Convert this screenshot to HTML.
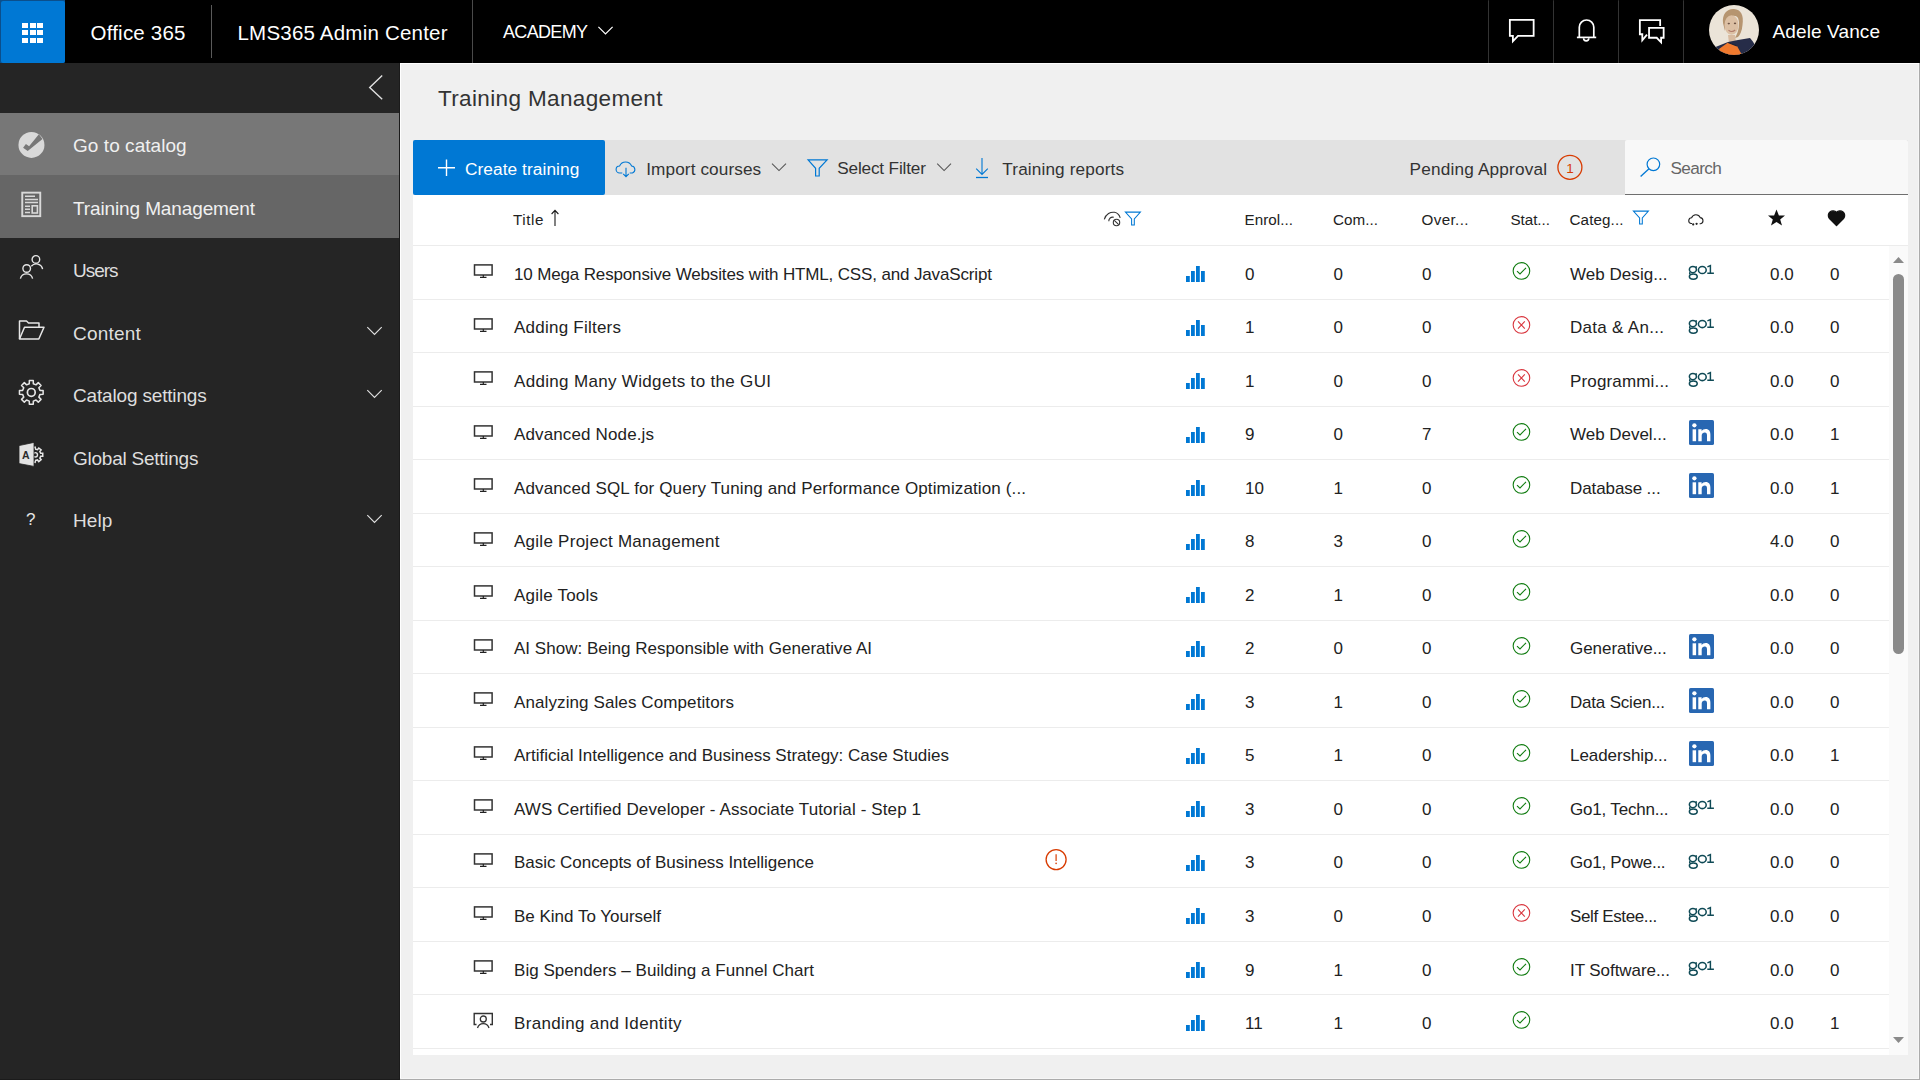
<!DOCTYPE html>
<html><head><meta charset="utf-8"><title>LMS365 Admin Center</title>
<style>
html,body{margin:0;padding:0;width:1920px;height:1080px;overflow:hidden;background:#f0f0f0;}
body{position:relative;font-family:"Liberation Sans", sans-serif;}
.t{position:absolute;white-space:nowrap;line-height:1;}
.b{position:absolute;display:block;}
svg.b{overflow:visible;}
</style></head><body>
<div class="b" style="left:0px;top:0px;width:1920px;height:63px;background:#000"></div>
<div class="b" style="left:0px;top:0px;width:65px;height:63px;background:#0b4f8c;border-bottom-right-radius:2px"></div>
<div class="b" style="left:1px;top:1px;width:64px;height:62px;background:#0078d4;border-radius:2px"></div>
<div class="b" style="left:22.1px;top:23px;width:5.7px;height:5.2px;background:#fff"></div>
<div class="b" style="left:29.9px;top:23px;width:5.7px;height:5.2px;background:#fff"></div>
<div class="b" style="left:37.4px;top:23px;width:5.7px;height:5.2px;background:#fff"></div>
<div class="b" style="left:22.1px;top:30.3px;width:5.7px;height:5.2px;background:#fff"></div>
<div class="b" style="left:29.9px;top:30.3px;width:5.7px;height:5.2px;background:#fff"></div>
<div class="b" style="left:37.4px;top:30.3px;width:5.7px;height:5.2px;background:#fff"></div>
<div class="b" style="left:22.1px;top:37.8px;width:5.7px;height:5.2px;background:#fff"></div>
<div class="b" style="left:29.9px;top:37.8px;width:5.7px;height:5.2px;background:#fff"></div>
<div class="b" style="left:37.4px;top:37.8px;width:5.7px;height:5.2px;background:#fff"></div>
<div class="t" style="left:90.5px;top:22.95px;font-size:20.5px;color:#fff;letter-spacing:0.214px;">Office 365</div>
<div class="b" style="left:211px;top:5px;width:1px;height:53px;background:#5a5a5a"></div>
<div class="t" style="left:237.5px;top:22.95px;font-size:20.5px;color:#fff;letter-spacing:0.207px;">LMS365 Admin Center</div>
<div class="b" style="left:472px;top:0px;width:1px;height:63px;background:#4a4a4a"></div>
<div class="t" style="left:503px;top:23.06px;font-size:18px;color:#fff;letter-spacing:-0.669px;">ACADEMY</div>
<svg class="b" style="left:596px;top:25px;" width="19" height="12" viewBox="0 0 19 12"><path d="M2.4 1.9 L9.5 8.9 L16.6 1.9" fill="none" stroke="#fff" stroke-width="1.2"/></svg>
<div class="b" style="left:1488px;top:0px;width:1px;height:63px;background:#333;border-radius:1px"></div>
<div class="b" style="left:1553px;top:0px;width:1px;height:63px;background:#333;border-radius:1px"></div>
<div class="b" style="left:1618px;top:0px;width:1px;height:63px;background:#333;border-radius:1px"></div>
<div class="b" style="left:1683px;top:0px;width:1px;height:63px;background:#333;border-radius:1px"></div>
<svg class="b" style="left:1506px;top:16px;" width="32" height="30" viewBox="0 0 32 30"><path d="M3.85 19.9 V3.85 H27.65 V19.9 H12 L6.9 25.3 V19.9 Z" fill="none" stroke="#fff" stroke-width="1.8" stroke-linejoin="miter"/></svg>
<svg class="b" style="left:1574px;top:16px;" width="26" height="28" viewBox="0 0 26 28"><path d="M5.3 21.4 V11.25 A7.25 7.25 0 0 1 19.8 11.25 V21.4" fill="none" stroke="#fff" stroke-width="1.7"/><path d="M2.9 21.4 H22.2" stroke="#fff" stroke-width="1.7"/><path d="M9.6 22.3 A2.6 2.6 0 0 0 14.8 22.3" fill="none" stroke="#fff" stroke-width="1.6"/></svg>
<svg class="b" style="left:1636px;top:16px;" width="32" height="30" viewBox="0 0 32 30"><g fill="none" stroke="#fff" stroke-width="1.8"><path d="M24.15 9.9 V4.05 H3.85 V18.25 H6.3 V24.3 L11 18.7"/><path d="M13.05 11.95 H27.65 V21.75 H25.1 V26.3 L20.7 21.75 H13.05 Z"/></g></svg>
<svg class="b" style="left:1709px;top:5px;filter:blur(0.35px)" width="50" height="50" viewBox="0 0 50 50"><defs><clipPath id="av"><circle cx="25" cy="25" r="25"/></clipPath></defs>
<g clip-path="url(#av)"><rect width="50" height="50" fill="#ebe4d8"/>
<path d="M14 18 C13 9 18 3.5 25 4 C32 4.5 35 10 33.5 20 C33 26 31 30 29 32 L26 33 C30 26 31 18 29 13 C27 10 22 10 19 14 C17 17 16.5 22 16 26 Z" fill="#b69570"/>
<ellipse cx="22.5" cy="20" rx="7" ry="9.8" fill="#dcc0a4"/>
<path d="M19 30 L26 30 L27 37 L20 38 Z" fill="#d8bba0"/>
<path d="M4 43 L19 37 L29 35 L41 33 C45 37 48 44 50 50 L0 50 Z" fill="#262c48"/>
<path d="M10 44 L19 37.5 L28 41 L33 50 L12 50 Z" fill="#f07a2e"/>
<path d="M19 37.5 L28 41" stroke="#1e2238" stroke-width="1.2"/>
<ellipse cx="19.8" cy="18.6" rx="1.2" ry="0.8" fill="#6e5446"/><ellipse cx="26" cy="18.4" rx="1.2" ry="0.8" fill="#6e5446"/>
<path d="M19.5 25.2 Q22.8 28 26.2 25" fill="none" stroke="#b07a6a" stroke-width="1.1"/>
</g></svg>
<div class="t" style="left:1772.5px;top:21.92px;font-size:19px;color:#fff;letter-spacing:0.116px;">Adele Vance</div>
<div class="b" style="left:0px;top:63px;width:400px;height:1017px;background:#252525"></div>
<svg class="b" style="left:364px;top:72px;" width="24" height="32" viewBox="0 0 24 32"><path d="M18.2 3.5 L5.7 15.5 L18.2 27.2" fill="none" stroke="#e0e0e0" stroke-width="1.4"/></svg>
<div class="b" style="left:0px;top:113px;width:400px;height:62px;background:#777"></div>
<div class="b" style="left:0px;top:175px;width:400px;height:63px;background:#666"></div>
<div class="t" style="left:73px;top:135.92px;font-size:19px;color:#f0f0f0;letter-spacing:0.056px;">Go to catalog</div>
<div class="t" style="left:73px;top:198.92px;font-size:19px;color:#f0f0f0;letter-spacing:-0.118px;">Training Management</div>
<div class="t" style="left:73px;top:260.92px;font-size:19px;color:#dedede;letter-spacing:-1.031px;">Users</div>
<div class="t" style="left:73px;top:323.92px;font-size:19px;color:#dedede;letter-spacing:0.192px;">Content</div>
<div class="t" style="left:73px;top:385.92px;font-size:19px;color:#dedede;letter-spacing:-0.170px;">Catalog settings</div>
<div class="t" style="left:73px;top:448.92px;font-size:19px;color:#dedede;letter-spacing:-0.247px;">Global Settings</div>
<div class="t" style="left:73px;top:510.92px;font-size:19px;color:#dedede;letter-spacing:0.107px;">Help</div>
<svg class="b" style="left:362px;top:323.2px;" width="24" height="16" viewBox="0 0 24 16"><path d="M5.3 4.2 L12.5 11.4 L19.7 4.2" fill="none" stroke="#e0e0e0" stroke-width="1.15"/></svg>
<svg class="b" style="left:362px;top:386.3px;" width="24" height="16" viewBox="0 0 24 16"><path d="M5.3 4.2 L12.5 11.4 L19.7 4.2" fill="none" stroke="#e0e0e0" stroke-width="1.15"/></svg>
<svg class="b" style="left:362px;top:511.29999999999995px;" width="24" height="16" viewBox="0 0 24 16"><path d="M5.3 4.2 L12.5 11.4 L19.7 4.2" fill="none" stroke="#e0e0e0" stroke-width="1.15"/></svg>
<svg class="b" style="left:17px;top:131px;" width="29" height="28" viewBox="0 0 29 28"><circle cx="14.45" cy="13.9" r="13" fill="#d9d9d9"/><path d="M6.1 16.7 L8.9 13 L12.1 15.3 L21.9 3.3 L25.5 7.9 L10.7 19.9 Z" fill="#777"/></svg>
<svg class="b" style="left:20px;top:191px;" width="23" height="27" viewBox="0 0 23 27"><rect x="2.25" y="1.65" width="18" height="23.5" fill="none" stroke="#d9d9d9" stroke-width="1.9"/><path d="M5 5.2 H15 M5 8.4 H18 M5 11.6 H18 M5 15.2 H10 M5 18.3 H10 M5 21.4 H10" stroke="#d9d9d9" stroke-width="1.5"/><rect x="12.2" y="14.8" width="5.2" height="7.2" fill="none" stroke="#d9d9d9" stroke-width="1.6"/></svg>
<svg class="b" style="left:18px;top:254px;" width="28" height="28" viewBox="0 0 28 28"><g fill="none" stroke="#e6e6e6" stroke-width="1.4"><circle cx="17.9" cy="5.4" r="3.8"/><path d="M13.3 12.3 A6.4 6.4 0 0 1 24.6 15.2"/><circle cx="8.7" cy="14.5" r="3.8"/><path d="M2.4 24.6 A6.3 6.3 0 0 1 14.6 24.6"/></g></svg>
<svg class="b" style="left:17px;top:320px;" width="30" height="22" viewBox="0 0 30 22"><g fill="none" stroke="#e6e6e6" stroke-width="1.5" stroke-linejoin="round"><path d="M2.5 19 V1 H9.5 L11.5 3 H22 V7"/><path d="M2.5 19 L7.5 7.3 H27 L21.8 19 Z"/></g></svg>
<svg class="b" style="left:17px;top:378px;" width="28" height="28" viewBox="0 0 28 28"><path d="M22.97 12.39 L26.14 12.43 L26.14 16.37 L22.97 16.41 L21.85 19.11 L24.06 21.38 L21.28 24.16 L19.01 21.95 L16.31 23.07 L16.27 26.24 L12.33 26.24 L12.29 23.07 L9.59 21.95 L7.32 24.16 L4.54 21.38 L6.75 19.11 L5.63 16.41 L2.46 16.37 L2.46 12.43 L5.63 12.39 L6.75 9.69 L4.54 7.42 L7.32 4.64 L9.59 6.85 L12.29 5.73 L12.33 2.56 L16.27 2.56 L16.31 5.73 L19.01 6.85 L21.28 4.64 L24.06 7.42 L21.85 9.69 Z" fill="none" stroke="#e6e6e6" stroke-width="1.5" stroke-linejoin="round"/><circle cx="14.3" cy="14.4" r="3.9" fill="none" stroke="#e6e6e6" stroke-width="1.7"/></svg>
<svg class="b" style="left:17px;top:440px;" width="30" height="30" viewBox="0 0 30 30"><path d="M23.69 13.29 L25.75 13.28 L25.75 16.32 L23.69 16.31 L22.85 18.07 L24.13 19.67 L21.75 21.57 L20.48 19.96 L18.58 20.39 L18.13 22.40 L15.16 21.72 L15.62 19.72 L14.10 18.50 L12.25 19.40 L10.93 16.66 L12.79 15.78 L12.79 13.82 L10.93 12.94 L12.25 10.20 L14.10 11.10 L15.62 9.88 L15.16 7.88 L18.13 7.20 L18.58 9.21 L20.48 9.64 L21.75 8.03 L24.13 9.93 L22.85 11.53 Z" fill="none" stroke="#e6e6e6" stroke-width="1.5"/><circle cx="18.3" cy="14.8" r="2.2" fill="none" stroke="#e6e6e6" stroke-width="1.4"/><path d="M2 5.6 L17 2.4 V26.4 L2 23.6 Z" fill="#e3e3e3" stroke="#252525" stroke-width="0.8"/><text x="5" y="19.2" font-family="Liberation Sans" font-size="10.5" font-weight="bold" fill="#2a2a2a">A</text></svg>
<div class="t" style="left:26px;top:511.11px;font-size:17px;color:#e6e6e6;">?</div>
<div class="b" style="left:400px;top:63px;width:1520px;height:1017px;background:#f0f0f0"></div>
<div class="b" style="left:400px;top:63px;width:1520px;height:1px;background:#fff"></div>
<div class="b" style="left:400px;top:63px;width:1px;height:1017px;background:#fff"></div>
<div class="t" style="left:438px;top:87.95px;font-size:22.5px;color:#333;letter-spacing:0.359px;">Training Management</div>
<div class="b" style="left:413px;top:140px;width:1495px;height:55px;background:#e2e2e2"></div>
<div class="b" style="left:413px;top:140px;width:192px;height:55px;background:#0078d4;border-radius:2px"></div>
<svg class="b" style="left:436px;top:158px;" width="22" height="20" viewBox="0 0 22 20"><path d="M10.5 1.5 V18 M2 9.8 H19" stroke="#fff" stroke-width="1.4"/></svg>
<div class="t" style="left:464.9px;top:161.16px;font-size:17.3px;color:#fff;letter-spacing:0.074px;">Create training</div>
<svg class="b" style="left:614px;top:159px;" width="24" height="20" viewBox="0 0 24 20"><path d="M8.3 14 H5.6 A3.5 3.5 0 0 1 5.6 7 A6.5 6.5 0 0 1 17.6 7 A3.6 3.6 0 0 1 18.4 14 H15.7" fill="none" stroke="#0078d4" stroke-width="1.1"/><path d="M12 8.8 V17.6 M9.2 14.8 L12 17.6 L14.8 14.8" fill="none" stroke="#0078d4" stroke-width="1.1"/></svg>
<div class="t" style="left:646.2px;top:160.64px;font-size:17.2px;color:#333;letter-spacing:0.102px;">Import courses</div>
<svg class="b" style="left:770px;top:160px;" width="18" height="14" viewBox="0 0 18 14"><path d="M2 3.7 L9 10.6 L16 3.7" fill="none" stroke="#555" stroke-width="1.05"/></svg>
<svg class="b" style="left:805px;top:157px;" width="25" height="22" viewBox="0 0 25 22"><path d="M3.1 2.9 H22.1 L14.2 11.3 V19 H10.6 V11.3 Z" fill="none" stroke="#0078d4" stroke-width="1.2" stroke-linejoin="miter"/></svg>
<div class="t" style="left:837.2px;top:160.04px;font-size:17.2px;color:#333;letter-spacing:-0.163px;">Select Filter</div>
<svg class="b" style="left:935px;top:160px;" width="18" height="14" viewBox="0 0 18 14"><path d="M2.2 3.7 L9.1 10.6 L16 3.7" fill="none" stroke="#555" stroke-width="1.05"/></svg>
<svg class="b" style="left:972px;top:156px;" width="20" height="24" viewBox="0 0 20 24"><path d="M10 2 V18.5 M4.2 12.7 L10 18.5 L15.8 12.7" fill="none" stroke="#0078d4" stroke-width="1.1"/><path d="M4 21.5 H16" stroke="#0078d4" stroke-width="1.3"/></svg>
<div class="t" style="left:1002.3px;top:160.64px;font-size:17.2px;color:#333;letter-spacing:0.131px;">Training reports</div>
<div class="t" style="left:1409.5px;top:160.64px;font-size:17.2px;color:#333;letter-spacing:0.190px;">Pending Approval</div>
<svg class="b" style="left:1555px;top:154px;" width="30" height="30" viewBox="0 0 30 30"><circle cx="14.9" cy="13.3" r="12" fill="none" stroke="#d83b01" stroke-width="1.3"/><text x="14.9" y="18.6" text-anchor="middle" font-family="Liberation Sans" font-size="13.5" fill="#d83b01">1</text></svg>
<div class="b" style="left:1625px;top:140px;width:283px;height:54px;background:#f8f8f8;border-bottom:1px solid #6f6f6f;border-top-left-radius:2px;border-top-right-radius:2px"></div>
<svg class="b" style="left:1638px;top:154px;" width="26" height="26" viewBox="0 0 26 26"><circle cx="15.4" cy="10.3" r="6.3" fill="none" stroke="#0078d4" stroke-width="1.2"/><path d="M11 14.8 L2.6 22.6" stroke="#0078d4" stroke-width="1.3"/></svg>
<div class="t" style="left:1670.5px;top:159.54px;font-size:17.2px;color:#666;letter-spacing:-0.634px;">Search</div>
<div class="b" style="left:413px;top:195px;width:1495px;height:860px;background:#fff"></div>
<div class="b" style="left:413px;top:245px;width:1495px;height:1px;background:#ececec"></div>
<div class="t" style="left:513px;top:211.73px;font-size:15.2px;color:#222;letter-spacing:0.590px;">Title</div>
<svg class="b" style="left:548px;top:206px;" width="14" height="22" viewBox="0 0 14 22"><path d="M7 4.6 V19.9 M3.6 8 L7 4.4 L10.4 8" fill="none" stroke="#1a1a1a" stroke-width="1.1"/></svg>
<svg class="b" style="left:1102px;top:209px;" width="22" height="20" viewBox="0 0 22 20"><g fill="none" stroke="#333" stroke-width="1.1"><path d="M2.3 10.3 C4 5 8.5 2.7 12.5 3.3 C15.3 3.8 17.3 5.8 18.2 8.8"/><path d="M6.8 12.3 C6.6 9.4 9 7.6 11.8 8.3"/><circle cx="14.5" cy="13.5" r="3.2"/><path d="M12.3 11.3 L16.7 15.7"/></g></svg>
<svg class="b" style="left:1123px;top:210px;" width="20" height="18" viewBox="0 0 20 18"><path d="M2.4 2.1 H17.4 L11.3 9 V14.9 H8.6 V9 Z" fill="none" stroke="#0078d4" stroke-width="1.05"/></svg>
<div class="t" style="left:1244.5px;top:211.73px;font-size:15.2px;color:#222;letter-spacing:0.054px;">Enrol...</div>
<div class="t" style="left:1333px;top:211.73px;font-size:15.2px;color:#222;letter-spacing:0.053px;">Com...</div>
<div class="t" style="left:1421.5px;top:211.73px;font-size:15.2px;color:#222;letter-spacing:0.378px;">Over...</div>
<div class="t" style="left:1510.5px;top:211.73px;font-size:15.2px;color:#222;letter-spacing:-0.048px;">Stat...</div>
<div class="t" style="left:1569.5px;top:211.73px;font-size:15.2px;color:#222;letter-spacing:0.116px;">Categ...</div>
<svg class="b" style="left:1631px;top:209px;" width="20" height="18" viewBox="0 0 20 18"><path d="M2.4 2.1 H17.4 L11.3 9 V14.9 H8.6 V9 Z" fill="none" stroke="#0078d4" stroke-width="1.05"/></svg>
<svg class="b" style="left:1686px;top:212px;" width="20" height="16" viewBox="0 0 20 16"><path d="M6 11.5 H4.9 A2.9 2.9 0 0 1 5.6 5.8 A4.6 4.6 0 0 1 14.2 5.6 A3.1 3.1 0 0 1 14.6 11.7 H13.6" fill="none" stroke="#222" stroke-width="1.1"/><circle cx="7.2" cy="12.4" r="1.15" fill="#222"/><circle cx="10.6" cy="11.8" r="1.15" fill="#222"/></svg>
<svg class="b" style="left:1767px;top:208px;" width="19" height="19" viewBox="0 0 19 19"><path d="M9.5 1.5 L11.9 7.4 L18 7.6 L13.2 11.5 L15 17.6 L9.5 14 L4 17.6 L5.8 11.5 L1 7.6 L7.1 7.4 Z" fill="#111"/></svg>
<svg class="b" style="left:1827px;top:208.7px;" width="19" height="18" viewBox="0 0 19 18"><path d="M9.5 16.5 L2.5 9.5 A4.2 4.2 0 0 1 9.5 3.5 A4.2 4.2 0 0 1 16.5 9.5 Z" fill="#111" stroke="#111" stroke-width="1.4" stroke-linejoin="round"/></svg>
<div class="b" style="left:413px;top:299px;width:1476px;height:1px;background:#ececec"></div>
<svg class="b" style="left:472px;top:263px;" width="22" height="16" viewBox="0 0 22 16"><rect x="2.5" y="1.9" width="17.6" height="10.1" fill="none" stroke="#333" stroke-width="1.5"/><path d="M11.3 12 V14 M8 14.4 H14.5" stroke="#222" stroke-width="1.2"/></svg>
<div class="t" style="left:514px;top:265.61px;font-size:17px;color:#222;letter-spacing:-0.146px;">10 Mega Responsive Websites with HTML, CSS, and JavaScript</div>
<svg class="b" style="left:1186px;top:266px;" width="20" height="16" viewBox="0 0 20 16"><rect x="0" y="10" width="3.8" height="6" fill="#0078d4"/><rect x="5" y="5" width="3.8" height="11" fill="#0078d4"/><rect x="10" y="0" width="3.8" height="16" fill="#0078d4"/><rect x="15" y="5" width="3.8" height="11" fill="#0078d4"/></svg>
<div class="t" style="left:1245px;top:265.61px;font-size:17px;color:#222;">0</div>
<div class="t" style="left:1333.5px;top:265.61px;font-size:17px;color:#222;">0</div>
<div class="t" style="left:1422px;top:265.61px;font-size:17px;color:#222;">0</div>
<svg class="b" style="left:1511px;top:261px;" width="22" height="22" viewBox="0 0 22 22"><circle cx="10.45" cy="9.95" r="8.3" fill="none" stroke="#107c10" stroke-width="1.1"/><path d="M6 10.2 L9 13 L15 6.8" fill="none" stroke="#107c10" stroke-width="1.1"/></svg>
<div class="t" style="left:1570px;top:265.61px;font-size:17px;color:#222;letter-spacing:0.044px;">Web Desig...</div>
<svg class="b" style="left:1680px;top:255px;" width="40" height="30" viewBox="0 0 40 30"><g fill="none" stroke="#0f4a56" stroke-width="1.55"><ellipse cx="12.9" cy="14.6" rx="3.5" ry="3.1"/><path d="M15.6 12.3 L16.9 11.7"/><path d="M10.2 17.2 Q9.2 18.2 10.2 19"/><ellipse cx="13.3" cy="21.6" rx="3.9" ry="2.7"/><ellipse cx="22.3" cy="15" rx="3.9" ry="3.6"/><path d="M27.4 11.8 L30.4 10.6 V18.3 M27.3 18.3 H33.9" stroke-width="1.45"/></g></svg>
<div class="t" style="left:1770px;top:265.61px;font-size:17px;color:#222;">0.0</div>
<div class="t" style="left:1830px;top:265.61px;font-size:17px;color:#222;">0</div>
<div class="b" style="left:413px;top:352px;width:1476px;height:1px;background:#ececec"></div>
<svg class="b" style="left:472px;top:317px;" width="22" height="16" viewBox="0 0 22 16"><rect x="2.5" y="1.9" width="17.6" height="10.1" fill="none" stroke="#333" stroke-width="1.5"/><path d="M11.3 12 V14 M8 14.4 H14.5" stroke="#222" stroke-width="1.2"/></svg>
<div class="t" style="left:514px;top:319.14px;font-size:17px;color:#222;letter-spacing:0.236px;">Adding Filters</div>
<svg class="b" style="left:1186px;top:320px;" width="20" height="16" viewBox="0 0 20 16"><rect x="0" y="10" width="3.8" height="6" fill="#0078d4"/><rect x="5" y="5" width="3.8" height="11" fill="#0078d4"/><rect x="10" y="0" width="3.8" height="16" fill="#0078d4"/><rect x="15" y="5" width="3.8" height="11" fill="#0078d4"/></svg>
<div class="t" style="left:1245px;top:319.14px;font-size:17px;color:#222;">1</div>
<div class="t" style="left:1333.5px;top:319.14px;font-size:17px;color:#222;">0</div>
<div class="t" style="left:1422px;top:319.14px;font-size:17px;color:#222;">0</div>
<svg class="b" style="left:1511px;top:315px;" width="22" height="22" viewBox="0 0 22 22"><circle cx="10.45" cy="9.95" r="8.3" fill="none" stroke="#d9363e" stroke-width="1.1"/><path d="M7 6.4 L13.8 13.6 M13.8 6.4 L7 13.6" fill="none" stroke="#d9363e" stroke-width="1.1"/></svg>
<div class="t" style="left:1570px;top:319.14px;font-size:17px;color:#222;letter-spacing:0.297px;">Data &amp; An...</div>
<svg class="b" style="left:1680px;top:309px;" width="40" height="30" viewBox="0 0 40 30"><g fill="none" stroke="#0f4a56" stroke-width="1.55"><ellipse cx="12.9" cy="14.6" rx="3.5" ry="3.1"/><path d="M15.6 12.3 L16.9 11.7"/><path d="M10.2 17.2 Q9.2 18.2 10.2 19"/><ellipse cx="13.3" cy="21.6" rx="3.9" ry="2.7"/><ellipse cx="22.3" cy="15" rx="3.9" ry="3.6"/><path d="M27.4 11.8 L30.4 10.6 V18.3 M27.3 18.3 H33.9" stroke-width="1.45"/></g></svg>
<div class="t" style="left:1770px;top:319.14px;font-size:17px;color:#222;">0.0</div>
<div class="t" style="left:1830px;top:319.14px;font-size:17px;color:#222;">0</div>
<div class="b" style="left:413px;top:406px;width:1476px;height:1px;background:#ececec"></div>
<svg class="b" style="left:472px;top:370px;" width="22" height="16" viewBox="0 0 22 16"><rect x="2.5" y="1.9" width="17.6" height="10.1" fill="none" stroke="#333" stroke-width="1.5"/><path d="M11.3 12 V14 M8 14.4 H14.5" stroke="#222" stroke-width="1.2"/></svg>
<div class="t" style="left:514px;top:372.67px;font-size:17px;color:#222;letter-spacing:0.325px;">Adding Many Widgets to the GUI</div>
<svg class="b" style="left:1186px;top:373px;" width="20" height="16" viewBox="0 0 20 16"><rect x="0" y="10" width="3.8" height="6" fill="#0078d4"/><rect x="5" y="5" width="3.8" height="11" fill="#0078d4"/><rect x="10" y="0" width="3.8" height="16" fill="#0078d4"/><rect x="15" y="5" width="3.8" height="11" fill="#0078d4"/></svg>
<div class="t" style="left:1245px;top:372.67px;font-size:17px;color:#222;">1</div>
<div class="t" style="left:1333.5px;top:372.67px;font-size:17px;color:#222;">0</div>
<div class="t" style="left:1422px;top:372.67px;font-size:17px;color:#222;">0</div>
<svg class="b" style="left:1511px;top:368px;" width="22" height="22" viewBox="0 0 22 22"><circle cx="10.45" cy="9.95" r="8.3" fill="none" stroke="#d9363e" stroke-width="1.1"/><path d="M7 6.4 L13.8 13.6 M13.8 6.4 L7 13.6" fill="none" stroke="#d9363e" stroke-width="1.1"/></svg>
<div class="t" style="left:1570px;top:372.67px;font-size:17px;color:#222;letter-spacing:0.155px;">Programmi...</div>
<svg class="b" style="left:1680px;top:362px;" width="40" height="30" viewBox="0 0 40 30"><g fill="none" stroke="#0f4a56" stroke-width="1.55"><ellipse cx="12.9" cy="14.6" rx="3.5" ry="3.1"/><path d="M15.6 12.3 L16.9 11.7"/><path d="M10.2 17.2 Q9.2 18.2 10.2 19"/><ellipse cx="13.3" cy="21.6" rx="3.9" ry="2.7"/><ellipse cx="22.3" cy="15" rx="3.9" ry="3.6"/><path d="M27.4 11.8 L30.4 10.6 V18.3 M27.3 18.3 H33.9" stroke-width="1.45"/></g></svg>
<div class="t" style="left:1770px;top:372.67px;font-size:17px;color:#222;">0.0</div>
<div class="t" style="left:1830px;top:372.67px;font-size:17px;color:#222;">0</div>
<div class="b" style="left:413px;top:459px;width:1476px;height:1px;background:#ececec"></div>
<svg class="b" style="left:472px;top:424px;" width="22" height="16" viewBox="0 0 22 16"><rect x="2.5" y="1.9" width="17.6" height="10.1" fill="none" stroke="#333" stroke-width="1.5"/><path d="M11.3 12 V14 M8 14.4 H14.5" stroke="#222" stroke-width="1.2"/></svg>
<div class="t" style="left:514px;top:426.20px;font-size:17px;color:#222;letter-spacing:0.134px;">Advanced Node.js</div>
<svg class="b" style="left:1186px;top:427px;" width="20" height="16" viewBox="0 0 20 16"><rect x="0" y="10" width="3.8" height="6" fill="#0078d4"/><rect x="5" y="5" width="3.8" height="11" fill="#0078d4"/><rect x="10" y="0" width="3.8" height="16" fill="#0078d4"/><rect x="15" y="5" width="3.8" height="11" fill="#0078d4"/></svg>
<div class="t" style="left:1245px;top:426.20px;font-size:17px;color:#222;">9</div>
<div class="t" style="left:1333.5px;top:426.20px;font-size:17px;color:#222;">0</div>
<div class="t" style="left:1422px;top:426.20px;font-size:17px;color:#222;">7</div>
<svg class="b" style="left:1511px;top:422px;" width="22" height="22" viewBox="0 0 22 22"><circle cx="10.45" cy="9.95" r="8.3" fill="none" stroke="#107c10" stroke-width="1.1"/><path d="M6 10.2 L9 13 L15 6.8" fill="none" stroke="#107c10" stroke-width="1.1"/></svg>
<div class="t" style="left:1570px;top:426.20px;font-size:17px;color:#222;letter-spacing:-0.029px;">Web Devel...</div>
<svg class="b" style="left:1688px;top:420px;" width="27" height="26" viewBox="0 0 27 26"><rect x="1" y="0" width="25" height="25" rx="1.6" fill="#2867b2"/><rect x="4.6" y="9.3" width="3.5" height="11.9" fill="#fff"/><circle cx="6.4" cy="5.3" r="2.15" fill="#fff"/><path d="M10.3 9.3 H13.6 V11 C14.5 9.7 16 9 17.7 9 C21 9 22.4 11.2 22.4 14.8 V21.2 H19 V15.3 C19 13.5 18.4 12.4 16.8 12.4 C15.2 12.4 13.7 13.5 13.7 15.6 V21.2 H10.3 Z" fill="#fff"/></svg>
<div class="t" style="left:1770px;top:426.20px;font-size:17px;color:#222;">0.0</div>
<div class="t" style="left:1830px;top:426.20px;font-size:17px;color:#222;">1</div>
<div class="b" style="left:413px;top:513px;width:1476px;height:1px;background:#ececec"></div>
<svg class="b" style="left:472px;top:477px;" width="22" height="16" viewBox="0 0 22 16"><rect x="2.5" y="1.9" width="17.6" height="10.1" fill="none" stroke="#333" stroke-width="1.5"/><path d="M11.3 12 V14 M8 14.4 H14.5" stroke="#222" stroke-width="1.2"/></svg>
<div class="t" style="left:514px;top:479.73px;font-size:17px;color:#222;letter-spacing:0.130px;">Advanced SQL for Query Tuning and Performance Optimization (...</div>
<svg class="b" style="left:1186px;top:480px;" width="20" height="16" viewBox="0 0 20 16"><rect x="0" y="10" width="3.8" height="6" fill="#0078d4"/><rect x="5" y="5" width="3.8" height="11" fill="#0078d4"/><rect x="10" y="0" width="3.8" height="16" fill="#0078d4"/><rect x="15" y="5" width="3.8" height="11" fill="#0078d4"/></svg>
<div class="t" style="left:1245px;top:479.73px;font-size:17px;color:#222;">10</div>
<div class="t" style="left:1333.5px;top:479.73px;font-size:17px;color:#222;">1</div>
<div class="t" style="left:1422px;top:479.73px;font-size:17px;color:#222;">0</div>
<svg class="b" style="left:1511px;top:475px;" width="22" height="22" viewBox="0 0 22 22"><circle cx="10.45" cy="9.95" r="8.3" fill="none" stroke="#107c10" stroke-width="1.1"/><path d="M6 10.2 L9 13 L15 6.8" fill="none" stroke="#107c10" stroke-width="1.1"/></svg>
<div class="t" style="left:1570px;top:479.73px;font-size:17px;color:#222;letter-spacing:-0.097px;">Database ...</div>
<svg class="b" style="left:1688px;top:473px;" width="27" height="26" viewBox="0 0 27 26"><rect x="1" y="0" width="25" height="25" rx="1.6" fill="#2867b2"/><rect x="4.6" y="9.3" width="3.5" height="11.9" fill="#fff"/><circle cx="6.4" cy="5.3" r="2.15" fill="#fff"/><path d="M10.3 9.3 H13.6 V11 C14.5 9.7 16 9 17.7 9 C21 9 22.4 11.2 22.4 14.8 V21.2 H19 V15.3 C19 13.5 18.4 12.4 16.8 12.4 C15.2 12.4 13.7 13.5 13.7 15.6 V21.2 H10.3 Z" fill="#fff"/></svg>
<div class="t" style="left:1770px;top:479.73px;font-size:17px;color:#222;">0.0</div>
<div class="t" style="left:1830px;top:479.73px;font-size:17px;color:#222;">1</div>
<div class="b" style="left:413px;top:566px;width:1476px;height:1px;background:#ececec"></div>
<svg class="b" style="left:472px;top:531px;" width="22" height="16" viewBox="0 0 22 16"><rect x="2.5" y="1.9" width="17.6" height="10.1" fill="none" stroke="#333" stroke-width="1.5"/><path d="M11.3 12 V14 M8 14.4 H14.5" stroke="#222" stroke-width="1.2"/></svg>
<div class="t" style="left:514px;top:533.26px;font-size:17px;color:#222;letter-spacing:0.266px;">Agile Project Management</div>
<svg class="b" style="left:1186px;top:534px;" width="20" height="16" viewBox="0 0 20 16"><rect x="0" y="10" width="3.8" height="6" fill="#0078d4"/><rect x="5" y="5" width="3.8" height="11" fill="#0078d4"/><rect x="10" y="0" width="3.8" height="16" fill="#0078d4"/><rect x="15" y="5" width="3.8" height="11" fill="#0078d4"/></svg>
<div class="t" style="left:1245px;top:533.26px;font-size:17px;color:#222;">8</div>
<div class="t" style="left:1333.5px;top:533.26px;font-size:17px;color:#222;">3</div>
<div class="t" style="left:1422px;top:533.26px;font-size:17px;color:#222;">0</div>
<svg class="b" style="left:1511px;top:529px;" width="22" height="22" viewBox="0 0 22 22"><circle cx="10.45" cy="9.95" r="8.3" fill="none" stroke="#107c10" stroke-width="1.1"/><path d="M6 10.2 L9 13 L15 6.8" fill="none" stroke="#107c10" stroke-width="1.1"/></svg>
<div class="t" style="left:1770px;top:533.26px;font-size:17px;color:#222;">4.0</div>
<div class="t" style="left:1830px;top:533.26px;font-size:17px;color:#222;">0</div>
<div class="b" style="left:413px;top:620px;width:1476px;height:1px;background:#ececec"></div>
<svg class="b" style="left:472px;top:584px;" width="22" height="16" viewBox="0 0 22 16"><rect x="2.5" y="1.9" width="17.6" height="10.1" fill="none" stroke="#333" stroke-width="1.5"/><path d="M11.3 12 V14 M8 14.4 H14.5" stroke="#222" stroke-width="1.2"/></svg>
<div class="t" style="left:514px;top:586.79px;font-size:17px;color:#222;letter-spacing:0.209px;">Agile Tools</div>
<svg class="b" style="left:1186px;top:587px;" width="20" height="16" viewBox="0 0 20 16"><rect x="0" y="10" width="3.8" height="6" fill="#0078d4"/><rect x="5" y="5" width="3.8" height="11" fill="#0078d4"/><rect x="10" y="0" width="3.8" height="16" fill="#0078d4"/><rect x="15" y="5" width="3.8" height="11" fill="#0078d4"/></svg>
<div class="t" style="left:1245px;top:586.79px;font-size:17px;color:#222;">2</div>
<div class="t" style="left:1333.5px;top:586.79px;font-size:17px;color:#222;">1</div>
<div class="t" style="left:1422px;top:586.79px;font-size:17px;color:#222;">0</div>
<svg class="b" style="left:1511px;top:582px;" width="22" height="22" viewBox="0 0 22 22"><circle cx="10.45" cy="9.95" r="8.3" fill="none" stroke="#107c10" stroke-width="1.1"/><path d="M6 10.2 L9 13 L15 6.8" fill="none" stroke="#107c10" stroke-width="1.1"/></svg>
<div class="t" style="left:1770px;top:586.79px;font-size:17px;color:#222;">0.0</div>
<div class="t" style="left:1830px;top:586.79px;font-size:17px;color:#222;">0</div>
<div class="b" style="left:413px;top:673px;width:1476px;height:1px;background:#ececec"></div>
<svg class="b" style="left:472px;top:638px;" width="22" height="16" viewBox="0 0 22 16"><rect x="2.5" y="1.9" width="17.6" height="10.1" fill="none" stroke="#333" stroke-width="1.5"/><path d="M11.3 12 V14 M8 14.4 H14.5" stroke="#222" stroke-width="1.2"/></svg>
<div class="t" style="left:514px;top:640.32px;font-size:17px;color:#222;letter-spacing:0.018px;">AI Show: Being Responsible with Generative AI</div>
<svg class="b" style="left:1186px;top:641px;" width="20" height="16" viewBox="0 0 20 16"><rect x="0" y="10" width="3.8" height="6" fill="#0078d4"/><rect x="5" y="5" width="3.8" height="11" fill="#0078d4"/><rect x="10" y="0" width="3.8" height="16" fill="#0078d4"/><rect x="15" y="5" width="3.8" height="11" fill="#0078d4"/></svg>
<div class="t" style="left:1245px;top:640.32px;font-size:17px;color:#222;">2</div>
<div class="t" style="left:1333.5px;top:640.32px;font-size:17px;color:#222;">0</div>
<div class="t" style="left:1422px;top:640.32px;font-size:17px;color:#222;">0</div>
<svg class="b" style="left:1511px;top:636px;" width="22" height="22" viewBox="0 0 22 22"><circle cx="10.45" cy="9.95" r="8.3" fill="none" stroke="#107c10" stroke-width="1.1"/><path d="M6 10.2 L9 13 L15 6.8" fill="none" stroke="#107c10" stroke-width="1.1"/></svg>
<div class="t" style="left:1570px;top:640.32px;font-size:17px;color:#222;letter-spacing:-0.052px;">Generative...</div>
<svg class="b" style="left:1688px;top:634px;" width="27" height="26" viewBox="0 0 27 26"><rect x="1" y="0" width="25" height="25" rx="1.6" fill="#2867b2"/><rect x="4.6" y="9.3" width="3.5" height="11.9" fill="#fff"/><circle cx="6.4" cy="5.3" r="2.15" fill="#fff"/><path d="M10.3 9.3 H13.6 V11 C14.5 9.7 16 9 17.7 9 C21 9 22.4 11.2 22.4 14.8 V21.2 H19 V15.3 C19 13.5 18.4 12.4 16.8 12.4 C15.2 12.4 13.7 13.5 13.7 15.6 V21.2 H10.3 Z" fill="#fff"/></svg>
<div class="t" style="left:1770px;top:640.32px;font-size:17px;color:#222;">0.0</div>
<div class="t" style="left:1830px;top:640.32px;font-size:17px;color:#222;">0</div>
<div class="b" style="left:413px;top:727px;width:1476px;height:1px;background:#ececec"></div>
<svg class="b" style="left:472px;top:691px;" width="22" height="16" viewBox="0 0 22 16"><rect x="2.5" y="1.9" width="17.6" height="10.1" fill="none" stroke="#333" stroke-width="1.5"/><path d="M11.3 12 V14 M8 14.4 H14.5" stroke="#222" stroke-width="1.2"/></svg>
<div class="t" style="left:514px;top:693.85px;font-size:17px;color:#222;letter-spacing:0.103px;">Analyzing Sales Competitors</div>
<svg class="b" style="left:1186px;top:694px;" width="20" height="16" viewBox="0 0 20 16"><rect x="0" y="10" width="3.8" height="6" fill="#0078d4"/><rect x="5" y="5" width="3.8" height="11" fill="#0078d4"/><rect x="10" y="0" width="3.8" height="16" fill="#0078d4"/><rect x="15" y="5" width="3.8" height="11" fill="#0078d4"/></svg>
<div class="t" style="left:1245px;top:693.85px;font-size:17px;color:#222;">3</div>
<div class="t" style="left:1333.5px;top:693.85px;font-size:17px;color:#222;">1</div>
<div class="t" style="left:1422px;top:693.85px;font-size:17px;color:#222;">0</div>
<svg class="b" style="left:1511px;top:689px;" width="22" height="22" viewBox="0 0 22 22"><circle cx="10.45" cy="9.95" r="8.3" fill="none" stroke="#107c10" stroke-width="1.1"/><path d="M6 10.2 L9 13 L15 6.8" fill="none" stroke="#107c10" stroke-width="1.1"/></svg>
<div class="t" style="left:1570px;top:693.85px;font-size:17px;color:#222;letter-spacing:-0.194px;">Data Scien...</div>
<svg class="b" style="left:1688px;top:688px;" width="27" height="26" viewBox="0 0 27 26"><rect x="1" y="0" width="25" height="25" rx="1.6" fill="#2867b2"/><rect x="4.6" y="9.3" width="3.5" height="11.9" fill="#fff"/><circle cx="6.4" cy="5.3" r="2.15" fill="#fff"/><path d="M10.3 9.3 H13.6 V11 C14.5 9.7 16 9 17.7 9 C21 9 22.4 11.2 22.4 14.8 V21.2 H19 V15.3 C19 13.5 18.4 12.4 16.8 12.4 C15.2 12.4 13.7 13.5 13.7 15.6 V21.2 H10.3 Z" fill="#fff"/></svg>
<div class="t" style="left:1770px;top:693.85px;font-size:17px;color:#222;">0.0</div>
<div class="t" style="left:1830px;top:693.85px;font-size:17px;color:#222;">0</div>
<div class="b" style="left:413px;top:780px;width:1476px;height:1px;background:#ececec"></div>
<svg class="b" style="left:472px;top:745px;" width="22" height="16" viewBox="0 0 22 16"><rect x="2.5" y="1.9" width="17.6" height="10.1" fill="none" stroke="#333" stroke-width="1.5"/><path d="M11.3 12 V14 M8 14.4 H14.5" stroke="#222" stroke-width="1.2"/></svg>
<div class="t" style="left:514px;top:747.38px;font-size:17px;color:#222;letter-spacing:-0.011px;">Artificial Intelligence and Business Strategy: Case Studies</div>
<svg class="b" style="left:1186px;top:748px;" width="20" height="16" viewBox="0 0 20 16"><rect x="0" y="10" width="3.8" height="6" fill="#0078d4"/><rect x="5" y="5" width="3.8" height="11" fill="#0078d4"/><rect x="10" y="0" width="3.8" height="16" fill="#0078d4"/><rect x="15" y="5" width="3.8" height="11" fill="#0078d4"/></svg>
<div class="t" style="left:1245px;top:747.38px;font-size:17px;color:#222;">5</div>
<div class="t" style="left:1333.5px;top:747.38px;font-size:17px;color:#222;">1</div>
<div class="t" style="left:1422px;top:747.38px;font-size:17px;color:#222;">0</div>
<svg class="b" style="left:1511px;top:743px;" width="22" height="22" viewBox="0 0 22 22"><circle cx="10.45" cy="9.95" r="8.3" fill="none" stroke="#107c10" stroke-width="1.1"/><path d="M6 10.2 L9 13 L15 6.8" fill="none" stroke="#107c10" stroke-width="1.1"/></svg>
<div class="t" style="left:1570px;top:747.38px;font-size:17px;color:#222;letter-spacing:-0.075px;">Leadership...</div>
<svg class="b" style="left:1688px;top:741px;" width="27" height="26" viewBox="0 0 27 26"><rect x="1" y="0" width="25" height="25" rx="1.6" fill="#2867b2"/><rect x="4.6" y="9.3" width="3.5" height="11.9" fill="#fff"/><circle cx="6.4" cy="5.3" r="2.15" fill="#fff"/><path d="M10.3 9.3 H13.6 V11 C14.5 9.7 16 9 17.7 9 C21 9 22.4 11.2 22.4 14.8 V21.2 H19 V15.3 C19 13.5 18.4 12.4 16.8 12.4 C15.2 12.4 13.7 13.5 13.7 15.6 V21.2 H10.3 Z" fill="#fff"/></svg>
<div class="t" style="left:1770px;top:747.38px;font-size:17px;color:#222;">0.0</div>
<div class="t" style="left:1830px;top:747.38px;font-size:17px;color:#222;">1</div>
<div class="b" style="left:413px;top:834px;width:1476px;height:1px;background:#ececec"></div>
<svg class="b" style="left:472px;top:798px;" width="22" height="16" viewBox="0 0 22 16"><rect x="2.5" y="1.9" width="17.6" height="10.1" fill="none" stroke="#333" stroke-width="1.5"/><path d="M11.3 12 V14 M8 14.4 H14.5" stroke="#222" stroke-width="1.2"/></svg>
<div class="t" style="left:514px;top:800.91px;font-size:17px;color:#222;letter-spacing:0.117px;">AWS Certified Developer - Associate Tutorial - Step 1</div>
<svg class="b" style="left:1186px;top:801px;" width="20" height="16" viewBox="0 0 20 16"><rect x="0" y="10" width="3.8" height="6" fill="#0078d4"/><rect x="5" y="5" width="3.8" height="11" fill="#0078d4"/><rect x="10" y="0" width="3.8" height="16" fill="#0078d4"/><rect x="15" y="5" width="3.8" height="11" fill="#0078d4"/></svg>
<div class="t" style="left:1245px;top:800.91px;font-size:17px;color:#222;">3</div>
<div class="t" style="left:1333.5px;top:800.91px;font-size:17px;color:#222;">0</div>
<div class="t" style="left:1422px;top:800.91px;font-size:17px;color:#222;">0</div>
<svg class="b" style="left:1511px;top:796px;" width="22" height="22" viewBox="0 0 22 22"><circle cx="10.45" cy="9.95" r="8.3" fill="none" stroke="#107c10" stroke-width="1.1"/><path d="M6 10.2 L9 13 L15 6.8" fill="none" stroke="#107c10" stroke-width="1.1"/></svg>
<div class="t" style="left:1570px;top:800.91px;font-size:17px;color:#222;letter-spacing:-0.184px;">Go1, Techn...</div>
<svg class="b" style="left:1680px;top:790px;" width="40" height="30" viewBox="0 0 40 30"><g fill="none" stroke="#0f4a56" stroke-width="1.55"><ellipse cx="12.9" cy="14.6" rx="3.5" ry="3.1"/><path d="M15.6 12.3 L16.9 11.7"/><path d="M10.2 17.2 Q9.2 18.2 10.2 19"/><ellipse cx="13.3" cy="21.6" rx="3.9" ry="2.7"/><ellipse cx="22.3" cy="15" rx="3.9" ry="3.6"/><path d="M27.4 11.8 L30.4 10.6 V18.3 M27.3 18.3 H33.9" stroke-width="1.45"/></g></svg>
<div class="t" style="left:1770px;top:800.91px;font-size:17px;color:#222;">0.0</div>
<div class="t" style="left:1830px;top:800.91px;font-size:17px;color:#222;">0</div>
<div class="b" style="left:413px;top:887px;width:1476px;height:1px;background:#ececec"></div>
<svg class="b" style="left:472px;top:852px;" width="22" height="16" viewBox="0 0 22 16"><rect x="2.5" y="1.9" width="17.6" height="10.1" fill="none" stroke="#333" stroke-width="1.5"/><path d="M11.3 12 V14 M8 14.4 H14.5" stroke="#222" stroke-width="1.2"/></svg>
<div class="t" style="left:514px;top:854.44px;font-size:17px;color:#222;letter-spacing:-0.038px;">Basic Concepts of Business Intelligence</div>
<svg class="b" style="left:1044px;top:848px;" width="25" height="25" viewBox="0 0 25 25"><circle cx="12.1" cy="11.6" r="10" fill="none" stroke="#d83b01" stroke-width="1.3"/><path d="M12.1 6.2 V13" stroke="#d83b01" stroke-width="1.2"/><circle cx="12.1" cy="15.4" r="0.8" fill="#d83b01"/></svg>
<svg class="b" style="left:1186px;top:855px;" width="20" height="16" viewBox="0 0 20 16"><rect x="0" y="10" width="3.8" height="6" fill="#0078d4"/><rect x="5" y="5" width="3.8" height="11" fill="#0078d4"/><rect x="10" y="0" width="3.8" height="16" fill="#0078d4"/><rect x="15" y="5" width="3.8" height="11" fill="#0078d4"/></svg>
<div class="t" style="left:1245px;top:854.44px;font-size:17px;color:#222;">3</div>
<div class="t" style="left:1333.5px;top:854.44px;font-size:17px;color:#222;">0</div>
<div class="t" style="left:1422px;top:854.44px;font-size:17px;color:#222;">0</div>
<svg class="b" style="left:1511px;top:850px;" width="22" height="22" viewBox="0 0 22 22"><circle cx="10.45" cy="9.95" r="8.3" fill="none" stroke="#107c10" stroke-width="1.1"/><path d="M6 10.2 L9 13 L15 6.8" fill="none" stroke="#107c10" stroke-width="1.1"/></svg>
<div class="t" style="left:1570px;top:854.44px;font-size:17px;color:#222;letter-spacing:-0.244px;">Go1, Powe...</div>
<svg class="b" style="left:1680px;top:844px;" width="40" height="30" viewBox="0 0 40 30"><g fill="none" stroke="#0f4a56" stroke-width="1.55"><ellipse cx="12.9" cy="14.6" rx="3.5" ry="3.1"/><path d="M15.6 12.3 L16.9 11.7"/><path d="M10.2 17.2 Q9.2 18.2 10.2 19"/><ellipse cx="13.3" cy="21.6" rx="3.9" ry="2.7"/><ellipse cx="22.3" cy="15" rx="3.9" ry="3.6"/><path d="M27.4 11.8 L30.4 10.6 V18.3 M27.3 18.3 H33.9" stroke-width="1.45"/></g></svg>
<div class="t" style="left:1770px;top:854.44px;font-size:17px;color:#222;">0.0</div>
<div class="t" style="left:1830px;top:854.44px;font-size:17px;color:#222;">0</div>
<div class="b" style="left:413px;top:941px;width:1476px;height:1px;background:#ececec"></div>
<svg class="b" style="left:472px;top:905px;" width="22" height="16" viewBox="0 0 22 16"><rect x="2.5" y="1.9" width="17.6" height="10.1" fill="none" stroke="#333" stroke-width="1.5"/><path d="M11.3 12 V14 M8 14.4 H14.5" stroke="#222" stroke-width="1.2"/></svg>
<div class="t" style="left:514px;top:907.97px;font-size:17px;color:#222;letter-spacing:-0.008px;">Be Kind To Yourself</div>
<svg class="b" style="left:1186px;top:908px;" width="20" height="16" viewBox="0 0 20 16"><rect x="0" y="10" width="3.8" height="6" fill="#0078d4"/><rect x="5" y="5" width="3.8" height="11" fill="#0078d4"/><rect x="10" y="0" width="3.8" height="16" fill="#0078d4"/><rect x="15" y="5" width="3.8" height="11" fill="#0078d4"/></svg>
<div class="t" style="left:1245px;top:907.97px;font-size:17px;color:#222;">3</div>
<div class="t" style="left:1333.5px;top:907.97px;font-size:17px;color:#222;">0</div>
<div class="t" style="left:1422px;top:907.97px;font-size:17px;color:#222;">0</div>
<svg class="b" style="left:1511px;top:903px;" width="22" height="22" viewBox="0 0 22 22"><circle cx="10.45" cy="9.95" r="8.3" fill="none" stroke="#d9363e" stroke-width="1.1"/><path d="M7 6.4 L13.8 13.6 M13.8 6.4 L7 13.6" fill="none" stroke="#d9363e" stroke-width="1.1"/></svg>
<div class="t" style="left:1570px;top:907.97px;font-size:17px;color:#222;letter-spacing:-0.364px;">Self Estee...</div>
<svg class="b" style="left:1680px;top:897px;" width="40" height="30" viewBox="0 0 40 30"><g fill="none" stroke="#0f4a56" stroke-width="1.55"><ellipse cx="12.9" cy="14.6" rx="3.5" ry="3.1"/><path d="M15.6 12.3 L16.9 11.7"/><path d="M10.2 17.2 Q9.2 18.2 10.2 19"/><ellipse cx="13.3" cy="21.6" rx="3.9" ry="2.7"/><ellipse cx="22.3" cy="15" rx="3.9" ry="3.6"/><path d="M27.4 11.8 L30.4 10.6 V18.3 M27.3 18.3 H33.9" stroke-width="1.45"/></g></svg>
<div class="t" style="left:1770px;top:907.97px;font-size:17px;color:#222;">0.0</div>
<div class="t" style="left:1830px;top:907.97px;font-size:17px;color:#222;">0</div>
<div class="b" style="left:413px;top:994px;width:1476px;height:1px;background:#ececec"></div>
<svg class="b" style="left:472px;top:959px;" width="22" height="16" viewBox="0 0 22 16"><rect x="2.5" y="1.9" width="17.6" height="10.1" fill="none" stroke="#333" stroke-width="1.5"/><path d="M11.3 12 V14 M8 14.4 H14.5" stroke="#222" stroke-width="1.2"/></svg>
<div class="t" style="left:514px;top:961.50px;font-size:17px;color:#222;letter-spacing:0.037px;">Big Spenders – Building a Funnel Chart</div>
<svg class="b" style="left:1186px;top:962px;" width="20" height="16" viewBox="0 0 20 16"><rect x="0" y="10" width="3.8" height="6" fill="#0078d4"/><rect x="5" y="5" width="3.8" height="11" fill="#0078d4"/><rect x="10" y="0" width="3.8" height="16" fill="#0078d4"/><rect x="15" y="5" width="3.8" height="11" fill="#0078d4"/></svg>
<div class="t" style="left:1245px;top:961.50px;font-size:17px;color:#222;">9</div>
<div class="t" style="left:1333.5px;top:961.50px;font-size:17px;color:#222;">1</div>
<div class="t" style="left:1422px;top:961.50px;font-size:17px;color:#222;">0</div>
<svg class="b" style="left:1511px;top:957px;" width="22" height="22" viewBox="0 0 22 22"><circle cx="10.45" cy="9.95" r="8.3" fill="none" stroke="#107c10" stroke-width="1.1"/><path d="M6 10.2 L9 13 L15 6.8" fill="none" stroke="#107c10" stroke-width="1.1"/></svg>
<div class="t" style="left:1570px;top:961.50px;font-size:17px;color:#222;letter-spacing:-0.060px;">IT Software...</div>
<svg class="b" style="left:1680px;top:951px;" width="40" height="30" viewBox="0 0 40 30"><g fill="none" stroke="#0f4a56" stroke-width="1.55"><ellipse cx="12.9" cy="14.6" rx="3.5" ry="3.1"/><path d="M15.6 12.3 L16.9 11.7"/><path d="M10.2 17.2 Q9.2 18.2 10.2 19"/><ellipse cx="13.3" cy="21.6" rx="3.9" ry="2.7"/><ellipse cx="22.3" cy="15" rx="3.9" ry="3.6"/><path d="M27.4 11.8 L30.4 10.6 V18.3 M27.3 18.3 H33.9" stroke-width="1.45"/></g></svg>
<div class="t" style="left:1770px;top:961.50px;font-size:17px;color:#222;">0.0</div>
<div class="t" style="left:1830px;top:961.50px;font-size:17px;color:#222;">0</div>
<div class="b" style="left:413px;top:1048px;width:1476px;height:1px;background:#ececec"></div>
<svg class="b" style="left:472px;top:1012px;" width="22" height="18" viewBox="0 0 22 18"><path d="M4.5 12.5 H2.2 V1.5 H20.3 V12.5 H18" fill="none" stroke="#333" stroke-width="1.4"/><circle cx="11.3" cy="7" r="3" fill="none" stroke="#333" stroke-width="1.3"/><path d="M5.5 16 A6 6 0 0 1 17 16" fill="none" stroke="#333" stroke-width="1.3"/></svg>
<div class="t" style="left:514px;top:1015.03px;font-size:17px;color:#222;letter-spacing:0.341px;">Branding and Identity</div>
<svg class="b" style="left:1186px;top:1015px;" width="20" height="16" viewBox="0 0 20 16"><rect x="0" y="10" width="3.8" height="6" fill="#0078d4"/><rect x="5" y="5" width="3.8" height="11" fill="#0078d4"/><rect x="10" y="0" width="3.8" height="16" fill="#0078d4"/><rect x="15" y="5" width="3.8" height="11" fill="#0078d4"/></svg>
<div class="t" style="left:1245px;top:1015.03px;font-size:17px;color:#222;">11</div>
<div class="t" style="left:1333.5px;top:1015.03px;font-size:17px;color:#222;">1</div>
<div class="t" style="left:1422px;top:1015.03px;font-size:17px;color:#222;">0</div>
<svg class="b" style="left:1511px;top:1010px;" width="22" height="22" viewBox="0 0 22 22"><circle cx="10.45" cy="9.95" r="8.3" fill="none" stroke="#107c10" stroke-width="1.1"/><path d="M6 10.2 L9 13 L15 6.8" fill="none" stroke="#107c10" stroke-width="1.1"/></svg>
<div class="t" style="left:1770px;top:1015.03px;font-size:17px;color:#222;">0.0</div>
<div class="t" style="left:1830px;top:1015.03px;font-size:17px;color:#222;">1</div>
<div class="b" style="left:1889px;top:245.5px;width:19px;height:809.5px;background:#fafafa"></div>
<svg class="b" style="left:1889px;top:252px;" width="19" height="14" viewBox="0 0 19 14"><path d="M4 11 L9.5 5 L15 11 Z" fill="#8a8a8a"/></svg>
<div class="b" style="left:1893px;top:274px;width:11px;height:380px;background:#8a8a8a;border-radius:5.5px"></div>
<svg class="b" style="left:1889px;top:1033px;" width="19" height="14" viewBox="0 0 19 14"><path d="M4 4 L9.5 10 L15 4 Z" fill="#8a8a8a"/></svg>
<div class="b" style="left:400px;top:1078px;width:1519px;height:1px;background:#f6f6f6"></div>
<div class="b" style="left:1918px;top:64px;width:1px;height:1015px;background:#f6f6f6"></div>
<div class="b" style="left:0px;top:1079px;width:400px;height:1px;background:#1b1b1b"></div>
<div class="b" style="left:399px;top:63px;width:1px;height:1017px;background:#1b1b1b"></div>
<div class="b" style="left:400px;top:1079px;width:1520px;height:1px;background:#ababab"></div>
<div class="b" style="left:1919px;top:63px;width:1px;height:1017px;background:#ababab"></div>
</body></html>
